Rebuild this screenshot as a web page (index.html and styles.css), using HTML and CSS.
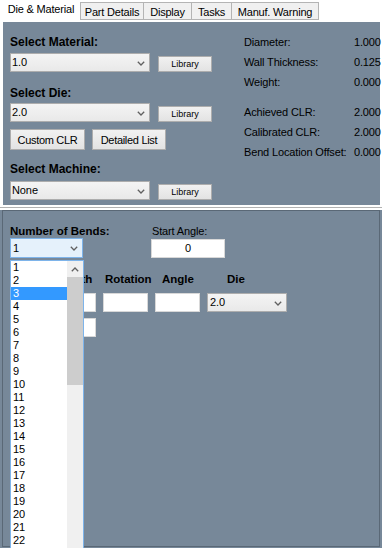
FILE: index.html
```html
<!DOCTYPE html>
<html>
<head>
<meta charset="utf-8">
<link rel="stylesheet" href="styles.css">
</head>
<body>
<div class="app">
  <div class="tabs">
    <div class="tab active w-die">Die &amp; Material</div>
    <div class="tab w-part">Part Details</div>
    <div class="tab w-disp joined">Display</div>
    <div class="tab w-task joined">Tasks</div>
    <div class="tab w-manuf joined">Manuf. Warning</div>
  </div>

  <div class="upper">
    <div class="left-col">
      <div class="lbl-b">Select Material:</div>
      <div class="combo-row m4">
        <div class="combo"><span>1.0</span><svg class="chev" width="8" height="5" viewBox="0 0 8 5"><polyline points="0.8,0.8 4,4 7.2,0.8" /></svg></div>
        <div class="btn lib">Library</div>
      </div>
      <div class="lbl-b m14">Select Die:</div>
      <div class="combo-row m3">
        <div class="combo"><span>2.0</span><svg class="chev" width="8" height="5" viewBox="0 0 8 5"><polyline points="0.8,0.8 4,4 7.2,0.8" /></svg></div>
        <div class="btn lib">Library</div>
      </div>
      <div class="btn-row m7">
        <div class="btn big w-clr">Custom CLR</div>
        <div class="btn big w-list">Detailed List</div>
      </div>
      <div class="lbl-b m12">Select Machine:</div>
      <div class="combo-row m5">
        <div class="combo"><span>None</span><svg class="chev" width="8" height="5" viewBox="0 0 8 5"><polyline points="0.8,0.8 4,4 7.2,0.8" /></svg></div>
        <div class="btn lib">Library</div>
      </div>
    </div>

    <div class="props">
      <div>Diameter:</div><div>1.000</div>
      <div>Wall Thickness:</div><div>0.125</div>
      <div>Weight:</div><div>0.000</div>
      <div class="spacer"></div>
      <div>Achieved CLR:</div><div>2.000</div>
      <div>Calibrated CLR:</div><div>2.000</div>
      <div>Bend Location Offset:</div><div>0.000</div>
    </div>
  </div>

  <div class="sep"></div>

  <div class="lower">
    <div class="lower-inner">
      <div class="bends-row">
        <div class="cell">
          <div class="lbl-h">Number of Bends:</div>
          <div class="combo focus w-bends"><span>1</span><svg class="chev" width="8" height="5" viewBox="0 0 8 5"><polyline points="0.8,0.8 4,4 7.2,0.8" /></svg></div>
        </div>
        <div class="cell start">
          <div class="lbl">Start Angle:</div>
          <div class="tbox w-start center">0</div>
        </div>
      </div>

      <div class="grid heads">
        <div class="lbl-h ph-len">Length</div>
        <div class="lbl-h ph-rot">Rotation</div>
        <div class="lbl-h ph-ang">Angle</div>
        <div class="lbl-h ph-die">Die</div>
      </div>
      <div class="grid row1">
        <div class="tbox"></div>
        <div class="tbox"></div>
        <div class="tbox"></div>
        <div class="combo die"><span>2.0</span><svg class="chev" width="8" height="5" viewBox="0 0 8 5"><polyline points="0.8,0.8 4,4 7.2,0.8" /></svg></div>
      </div>
      <div class="grid row2">
        <div class="tbox"></div>
      </div>

      <div class="dropdown">
        <div class="list">
          <div class="item">1</div>
          <div class="item">2</div>
          <div class="item sel">3</div>
          <div class="item">4</div>
          <div class="item">5</div>
          <div class="item">6</div>
          <div class="item">7</div>
          <div class="item">8</div>
          <div class="item">9</div>
          <div class="item">10</div>
          <div class="item">11</div>
          <div class="item">12</div>
          <div class="item">13</div>
          <div class="item">14</div>
          <div class="item">15</div>
          <div class="item">16</div>
          <div class="item">17</div>
          <div class="item">18</div>
          <div class="item">19</div>
          <div class="item">20</div>
          <div class="item">21</div>
          <div class="item">22</div>
        </div>
        <div class="scroll">
          <div class="arrow"><svg width="8" height="5" viewBox="0 0 8 5"><polyline points="0.8,4.2 4,1 7.2,4.2" /></svg></div>
          <div class="thumb"></div>
        </div>
      </div>
    </div>
  </div>
</div>
</body>
</html>
```

FILE: styles.css
```css
* { box-sizing: border-box; }
html, body { margin: 0; padding: 0; }
body {
  width: 382px;
  height: 548px;
  overflow: hidden;
  background: #fff;
  font-family: "Liberation Sans", Arial, sans-serif;
  font-size: 11px;
  color: #000;
}
.app { display: flex; flex-direction: column; height: 548px; }

/* tabs */
.tabs { display: flex; height: 22px; padding-left: 2px; align-items: flex-start; flex: none; }
.tab {
  height: 18px;
  margin-top: 2px;
  border: 1px solid #b4b4b4;
  background: #f0f0f0;
  text-align: center;
  line-height: 14px;
  padding-top: 2px;
  letter-spacing: -0.2px;
  white-space: nowrap;
}
.tab.joined { margin-left: -1px; }
.tab.active { height: 21px; margin-top: 0; border: none; background: #fff; padding-top: 2px; }
.w-die { width: 78px; }
.w-part { width: 64px; }
.w-disp { width: 49px; }
.w-task { width: 41px; }
.w-manuf { width: 88px; }

/* upper panel */
.upper {
  flex: none;
  margin: 0 2px 0 3px;
  height: 183px;
  background: #778899;
  display: grid;
  grid-template-columns: 234px 1fr;
  padding-left: 7px;
}
.left-col { padding-top: 13px; display: flex; flex-direction: column; align-items: flex-start; }
.lbl-b { font-weight: bold; font-size: 12px; line-height: 14px; }
.m3 { margin-top: 3px; }
.m4 { margin-top: 4px; }
.m5 { margin-top: 5px; }
.m7 { margin-top: 7px; }
.m12 { margin-top: 12px; }
.m14 { margin-top: 14px; }

.combo-row { display: flex; align-items: flex-end; gap: 8px; }
.combo {
  width: 140px;
  height: 19px;
  border: 1px solid #adadad;
  background: linear-gradient(#f4f4f4, #e9e9e9);
  display: flex;
  align-items: center;
  justify-content: space-between;
  padding: 0 4px 0 1px;
  line-height: 17px;
  letter-spacing: -0.1px;
}
.chev { display: block; margin-top: 1px; }
.chev polyline, .arrow polyline { fill: none; stroke: #606060; stroke-width: 1.3; }

.btn {
  border: 1px solid #adadad;
  background: linear-gradient(#f1f1f1, #e3e3e3);
  display: flex;
  align-items: center;
  justify-content: center;
  white-space: nowrap;
}
.lib { width: 54px; height: 16px; font-size: 9px; }
.btn-row { display: flex; gap: 7px; }
.big { height: 21px; font-size: 11px; letter-spacing: -0.3px; }
.w-clr { width: 75px; }
.w-list { width: 74px; }

.props {
  padding-top: 10px;
  display: grid;
  grid-template-columns: 110px auto;
  grid-template-rows: 20px 20px 20px 10px 20px 20px 20px;
  align-content: start;
  line-height: 20px;
  white-space: nowrap;
  letter-spacing: -0.15px;
}
.props .spacer { grid-column: 1 / -1; }

/* separator */
.sep {
  flex: none;
  height: 5px;
  background: linear-gradient(#fff 0 2px, #b2b2b2 2px 3px, #fff 3px 5px);
}

/* lower panel */
.lower { flex: 1; background: #778899; padding: 0 2px 1px 2px; display: flex; }
.lower-inner {
  flex: 1;
  border: 1px solid #5a6876;
  position: relative;
  padding: 13px 0 0 7px;
}
.bends-row { display: grid; grid-template-columns: 140px 1fr; }
.cell { display: flex; flex-direction: column; align-items: flex-start; }
.cell.start { padding-left: 1px; }
.cell.start .lbl { padding-left: 1px; }
.lbl { line-height: 14px; letter-spacing: -0.15px; }
.lbl-h { font-weight: bold; font-size: 11.5px; line-height: 14px; white-space: nowrap; }
.combo.focus {
  border-color: #7eb4ea;
  background: #e5f1fb;
  height: 20px;
}
.w-bends { width: 73px; padding-left: 2px; }
.tbox {
  height: 19px;
  background: #fff;
  border: 1px solid #d8d8d8;
}
.w-start { width: 74px; margin-top: 1px; }
.center { text-align: center; line-height: 17px; }

.grid {
  display: grid;
  grid-template-columns: 45px 45px 45px 80px;
  column-gap: 7px;
  margin-left: 41px;
}
.heads { margin-top: 14px; }
.row1 { margin-top: 7px; }
.row2 { margin-top: 6px; }
.ph-len { padding-left: 3px; }
.ph-rot { padding-left: 2px; }
.ph-ang { padding-left: 7px; }
.ph-die { padding-left: 20px; }
.combo.die { width: 80px; padding-left: 2px; }

/* dropdown list */
.dropdown {
  position: absolute;
  left: 7px;
  top: 49px;
  width: 74px;
  height: 300px;
  border: 1px solid #7eb4ea;
  background: #fff;
  display: flex;
}
.list { flex: 1; }
.item { height: 13px; line-height: 13px; padding-left: 2px; }
.item.sel { background: #3399ff; color: #fff; }
.scroll { width: 16px; background: #f0f0f0; display: flex; flex-direction: column; }
.arrow { height: 16px; display: flex; align-items: center; justify-content: center; }
.thumb { height: 108px; background: #cdcdcd; }
```
